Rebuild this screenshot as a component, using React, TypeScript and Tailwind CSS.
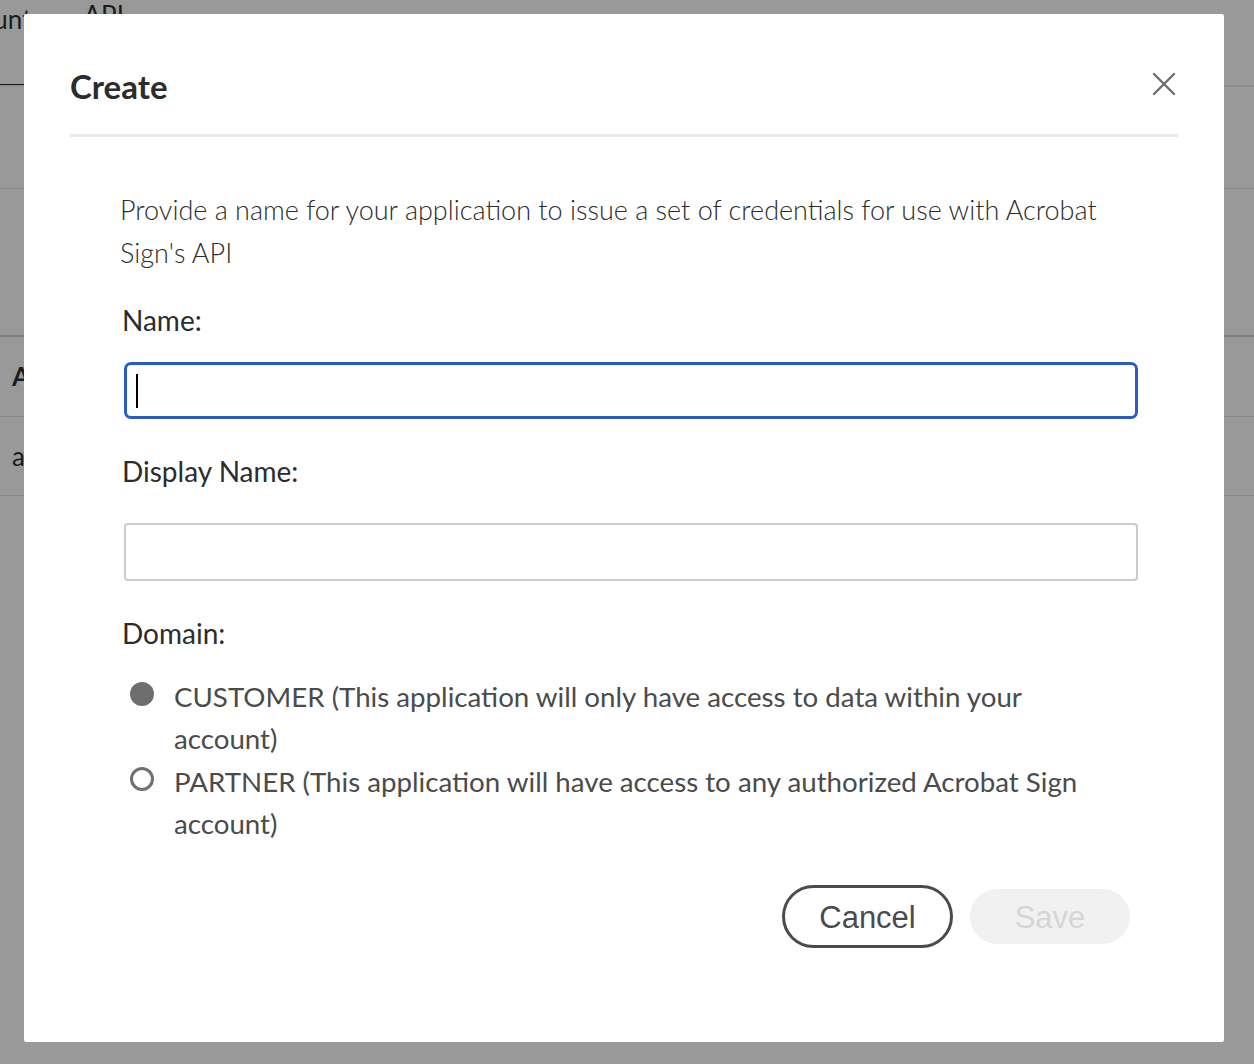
import React from 'react';

const sans = "font-['Lato','Open_Sans',sans-serif]";

function CloseIcon() {
    return (
        <svg width="24" height="24" viewBox="0 0 24 24" fill="none">
            <path d="M2 2L22 22M22 2L2 22" stroke="#6e6e6e" strokeWidth="2.4" strokeLinecap="round" />
        </svg>
    );
}

// ページ背景（モーダルの下）
function BackgroundPage() {
    return (
        <div className={`flex flex-col w-full ${sans} text-[#1c1c1c]`}>
            <div className="h-[87px] border-b-2 border-[#8e8e8e] flex gap-[52px] text-[26px] leading-[36px]">
                <div className="ml-[-63px] pt-[1px] flex flex-col">
                    <span>Account</span>
                    <div className="mt-[47px] h-[3px] bg-[#141414]" />
                </div>
                <span className="mt-[-3px]">API</span>
            </div>
            <div className="h-[102px] border-b border-[#8a8a8a]" />
            <div className="h-[148px] border-b-2 border-[#7c7c7c]" />
            <div className="h-[80px] border-b border-[#8a8a8a] flex items-center pl-[12px] text-[26px] font-bold">A</div>
            <div className="h-[79px] border-b border-[#8a8a8a] flex items-center pl-[12px] text-[26px]">a</div>
        </div>
    );
}

function Radio({ checked, children }: { checked: boolean; children: React.ReactNode }) {
    return (
        <label className="flex items-start gap-[20px] pl-[6px]">
            <span className="mt-[7px] shrink-0 w-[24px] h-[24px] flex items-center justify-center">
                {checked ? (
                    <span className="w-[24px] h-[24px] rounded-full bg-[#6e6e6e]" />
                ) : (
                    <span className="w-[24px] h-[24px] rounded-full border-[3px] border-[#707070]" />
                )}
            </span>
            <span className="w-[930px] text-[27.7px] leading-[42px] pt-[1px] text-[#4b4b4b]">{children}</span>
        </label>
    );
}

export default function App() {
    return (
        <div className="relative w-full h-[1064px] bg-[#999999] overflow-hidden">
            <BackgroundPage />

            {/* モーダル */}
            <div className={`absolute left-[24px] top-[14px] w-[1200px] h-[1028px] bg-white rounded-[2px] px-[46px] pt-[53px] ${sans}`}>
                {/* ヘッダー */}
                <div className="flex items-center justify-between h-[38px]">
                    <h1 className="text-[33px] leading-[38px] font-bold text-[#2c2c2c]">Create</h1>
                    <button className="mr-[2px] mt-[-4px]">
                        <CloseIcon />
                    </button>
                </div>
                <div className="mt-[29px] h-[3px] bg-[#eaeaea]" />

                {/* 本文 */}
                <div className="pl-[50px] pr-[40px]">
                    <p className="mt-[51px] w-[1010px] text-[27px] leading-[43px] font-light text-[#2c2c2c]">
                        Provide a name for your application to issue a set of credentials for use with Acrobat Sign's API
                    </p>

                    <div className="pl-[4px]">
                        <div className="mt-[30px] ml-[-2px] text-[28px] leading-[32px] text-[#2c2c2c]">Name:</div>
                        <div className="mt-[26px] h-[57px] border-[3px] border-[#2a5cc5] rounded-[7px] flex items-center pl-[9px]">
                            <span className="w-[2px] h-[34px] bg-black" />
                        </div>

                        <div className="mt-[36px] ml-[-2px] text-[28px] leading-[32px] text-[#2c2c2c]">Display Name:</div>
                        <div className="mt-[36px] h-[58px] border-2 border-[#cccccc] rounded-[4px]" />

                        <div className="mt-[36px] ml-[-2px] text-[28px] leading-[32px] text-[#2c2c2c]">Domain:</div>

                        <div className="mt-[26px] flex flex-col">
                            <Radio checked>
                                CUSTOMER (This application will only have access to data within your account)
                            </Radio>
                            <Radio checked={false}>
                                PARTNER (This application will have access to any authorized Acrobat Sign account)
                            </Radio>
                        </div>

                        {/* ボタン */}
                        <div className="mt-[40px] flex items-center justify-end gap-[17px] pr-[8px] font-['Liberation_Sans',Arial,sans-serif]">
                            <button className="w-[171px] h-[63px] rounded-full border-[3px] border-[#4b4b4b] text-[31px] leading-[36px] pt-[2px] text-[#4b4b4b]">
                                Cancel
                            </button>
                            <button className="w-[160px] h-[55px] rounded-full bg-[#f1f1f1] text-[31px] leading-[36px] pt-[2px] text-[#d6d6d6]">
                                Save
                            </button>
                        </div>
                    </div>
                </div>
            </div>
        </div>
    );
}
